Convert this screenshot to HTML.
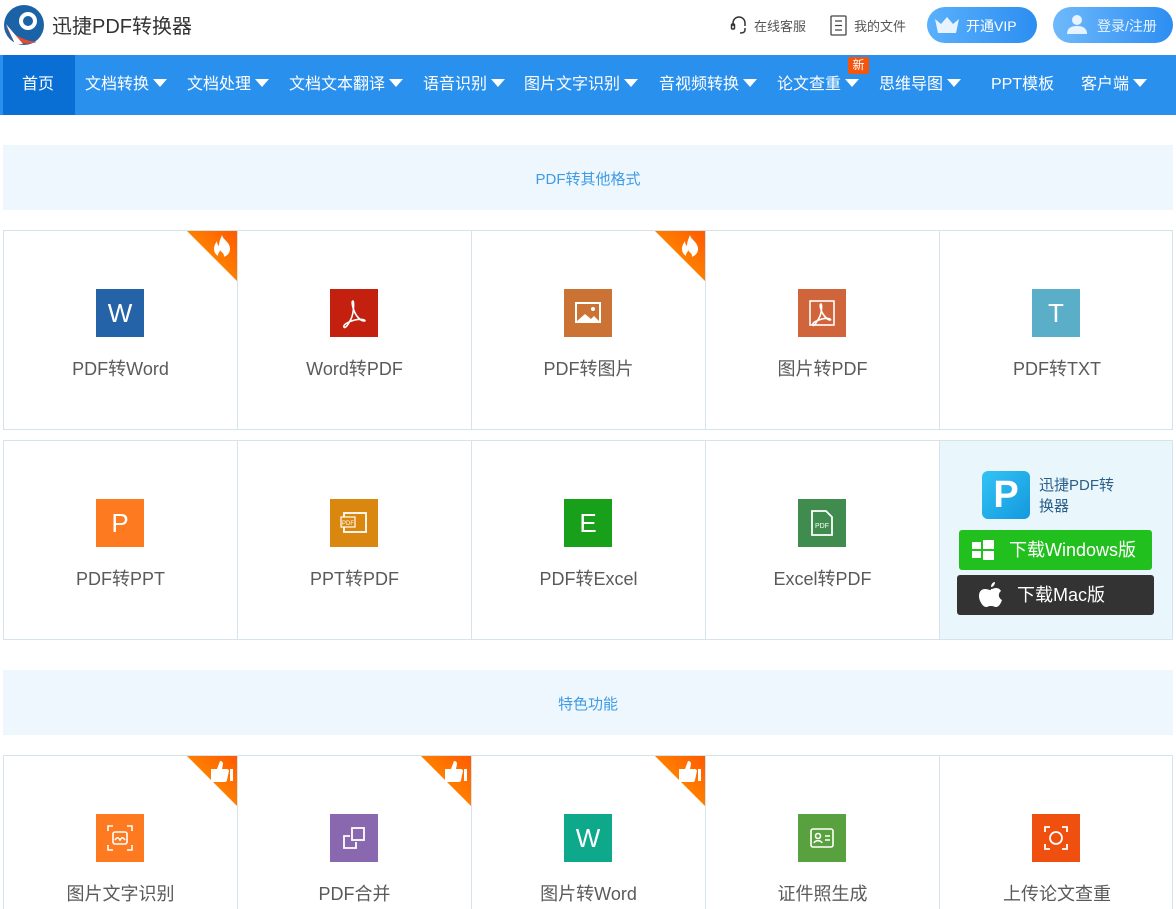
<!DOCTYPE html>
<html><head><meta charset="utf-8"><style>
*{margin:0;padding:0;box-sizing:border-box}
html,body{width:1176px;height:909px;overflow:hidden}
body{background:#fff;font-family:"Liberation Sans","Noto Sans CJK SC",sans-serif;position:relative}
.abs{position:absolute}
.nav{position:absolute;left:0;top:55px;width:1176px;height:60px;background:#2a90ee}
.nav span{position:absolute;top:0;line-height:60px;color:#fff;font-size:16px;white-space:nowrap}
.tri{display:inline-block;width:0;height:0;border-left:7px solid transparent;border-right:7px solid transparent;border-top:8px solid #fff;margin-left:4px;vertical-align:2px}
.sec{position:absolute;left:3px;width:1170px;height:65px;background:#eff7fe;color:#3e9be4;font-size:15px;text-align:center;line-height:69px}
.row{position:absolute;left:3px;width:1170px;height:200px;border:1px solid #d7e3ea;overflow:hidden}
.cell{position:absolute;top:0;height:100%;width:234px;border-right:1px solid #d7e3ea;overflow:hidden}
.ic{position:absolute;left:92px;top:58px;width:48px;height:48px;color:#fff;font-size:26px;text-align:center;line-height:48px}
.ic svg{position:absolute;left:0;top:0}
.lb{position:absolute;left:0;width:100%;top:124px;text-align:center;font-size:18px;color:#5a5a5a}
.badge{position:absolute;right:0;top:0;width:50px;height:50px;background:linear-gradient(225deg,#ff5a00,#ffa300);clip-path:polygon(0 0,100% 0,100% 100%)}
.bi{position:absolute;right:3px;top:3px}
</style></head><body>
<svg class="abs" style="left:3px;top:4px" width="42" height="42" viewBox="0 0 42 42"><circle cx="21" cy="21" r="20" fill="#1b63a6"/><circle cx="25" cy="17" r="9" fill="#fff"/><circle cx="25" cy="17" r="5" fill="#1b63a6"/><path d="M3 22 Q14 36 34 38 Q22 42 10 36Z" fill="#e94a2e"/><path d="M3 20 L20 40 L12 40Z" fill="#fff"/></svg>
<div class="abs" style="left:52px;top:10px;font-size:20px;color:#333">迅捷PDF转换器</div>
<svg class="abs" style="left:729px;top:15px" width="20" height="20" viewBox="0 0 20 20" fill="none" stroke="#333" stroke-width="1.5"><path d="M4 11V8a6 6 0 0112 0v3"/><rect x="2.5" y="9" width="3" height="5" rx="1"/><path d="M16 13v2c0 2-2 3-5 3"/></svg>
<div class="abs" style="left:754px;top:16px;font-size:13px;color:#555">在线客服</div>
<svg class="abs" style="left:830px;top:15px" width="18" height="21" viewBox="0 0 18 21" fill="none" stroke="#444" stroke-width="1.3"><rect x="1" y="1" width="15" height="19" rx="1"/><path d="M5 6h7M5 10.5h7M5 15h7"/></svg>
<div class="abs" style="left:854px;top:16px;font-size:13px;color:#555">我的文件</div>
<div class="abs" style="left:927px;top:7px;width:110px;height:36px;border-radius:18px;background:linear-gradient(90deg,#5ab0fb,#2c8ef2)"></div>
<svg class="abs" style="left:934px;top:16px" width="26" height="18" viewBox="0 0 26 18"><path d="M1 3l6 5 6-7 6 7 6-5-3 14H4z" fill="#e7f3ff"/></svg>
<div class="abs" style="left:966px;top:16px;font-size:14px;color:#fff">开通VIP</div>
<div class="abs" style="left:1053px;top:7px;width:120px;height:36px;border-radius:18px;background:linear-gradient(90deg,#6fb9fb,#2c8ef2)"></div>
<svg class="abs" style="left:1066px;top:13px" width="22" height="22" viewBox="0 0 22 22" fill="#e7f3ff"><circle cx="11" cy="7" r="5"/><path d="M1 21c0-6 4-8 10-8s10 2 10 8z"/></svg>
<div class="abs" style="left:1097px;top:16px;font-size:14px;color:#eaf4ff">登录/注册</div>
<div class="nav">
<div class="abs" style="left:3px;top:0;width:72px;height:60px;background:#0a6fd5"></div>
<span style="left:22px">首页</span>
<span style="left:85px">文档转换<i class="tri"></i></span>
<span style="left:187px">文档处理<i class="tri"></i></span>
<span style="left:289px">文档文本翻译<i class="tri"></i></span>
<span style="left:423px">语音识别<i class="tri"></i></span>
<span style="left:524px">图片文字识别<i class="tri"></i></span>
<span style="left:659px">音视频转换<i class="tri"></i></span>
<span style="left:777px">论文查重<i class="tri"></i></span>
<span style="left:879px">思维导图<i class="tri"></i></span>
<span style="left:991px">PPT模板</span>
<span style="left:1081px">客户端<i class="tri"></i></span>
<div class="abs" style="left:848px;top:2px;width:21px;height:17px;background:#f5560c;color:#fff;font-size:12px;line-height:17px;text-align:center;border-radius:2px">新</div>
</div>
<div class="sec" style="top:145px">PDF转其他格式</div>
<div class="row" style="top:230px">
<div class="cell" style="left:0"><div class="badge"></div><svg class="bi" width="24" height="26" viewBox="0 0 24 26" fill="#fff"><path d="M12 1c1 5 8 7 8 14a8 8 0 01-16 0c0-4 2-6 3-8 0 3 1 4 2 5 0-5 2-8 3-11z"/><path d="M12 25c-3 0-4-2-4-4 0-2 2-3 2-5 1 2 4 3 4 6 0 2-1 3-2 3z" fill="#ff7a00"/></svg><div class="ic" style="background:#2563a8">W</div><div class="lb">PDF转Word</div></div>
<div class="cell" style="left:234px"><div class="ic" style="background:#c4200f"><svg width="48" height="48" viewBox="0 0 48 48" fill="none" stroke="#fff" stroke-width="1.6"><path d="M23 12c-2 0 0 8 2 12s6 8 9 8-1-3-9-1-12 5-11 7 4-2 7-8 3-18 2-18z"/></svg></div><div class="lb">Word转PDF</div></div>
<div class="cell" style="left:468px"><div class="badge"></div><svg class="bi" width="24" height="26" viewBox="0 0 24 26" fill="#fff"><path d="M12 1c1 5 8 7 8 14a8 8 0 01-16 0c0-4 2-6 3-8 0 3 1 4 2 5 0-5 2-8 3-11z"/><path d="M12 25c-3 0-4-2-4-4 0-2 2-3 2-5 1 2 4 3 4 6 0 2-1 3-2 3z" fill="#ff7a00"/></svg><div class="ic" style="background:#cb7334"><svg width="48" height="48" viewBox="0 0 48 48"><rect x="12" y="14" width="24" height="19" fill="none" stroke="#fff" stroke-width="2"/><path d="M13 32l8-7 6 5 3-3 5 5z" fill="#fff"/><circle cx="29" cy="20" r="2" fill="#fff"/></svg></div><div class="lb">PDF转图片</div></div>
<div class="cell" style="left:702px"><div class="ic" style="background:#d0643a"><svg width="48" height="48" viewBox="0 0 48 48" fill="none" stroke="#fff" stroke-width="1.6"><rect x="12" y="12" width="24" height="24"/><path d="M23 15c-2 0 0 7 2 10s5 6 7 6-1-3-8-1-10 4-9 6 3-2 6-7 3-14 2-14z"/></svg></div><div class="lb">图片转PDF</div></div>
<div class="cell" style="left:936px;border-right:none"><div class="ic" style="background:#5aaec8">T</div><div class="lb">PDF转TXT</div></div>
</div>
<div class="row" style="top:440px">
<div class="cell" style="left:0"><div class="ic" style="background:#fd7a20">P</div><div class="lb">PDF转PPT</div></div>
<div class="cell" style="left:234px"><div class="ic" style="background:#d9870e"><svg width="48" height="48" viewBox="0 0 48 48"><rect x="14" y="14" width="22" height="19" fill="none" stroke="#fff" stroke-width="1.8"/><rect x="11" y="18" width="14" height="10" fill="#d9870e" stroke="#fff" stroke-width="1.2"/><text x="18" y="26" font-size="6" fill="#fff" text-anchor="middle" font-family="Liberation Sans">PDF</text></svg></div><div class="lb">PPT转PDF</div></div>
<div class="cell" style="left:468px"><div class="ic" style="background:#18a01b">E</div><div class="lb">PDF转Excel</div></div>
<div class="cell" style="left:702px"><div class="ic" style="background:#3f8c4e"><svg width="48" height="48" viewBox="0 0 48 48"><path d="M14 12h14l6 6v18H14z" fill="none" stroke="#fff" stroke-width="1.8"/><text x="24" y="29" font-size="7" fill="#fff" text-anchor="middle" font-family="Liberation Sans">PDF</text></svg></div><div class="lb">Excel转PDF</div></div>
<div class="cell" style="left:936px;width:232px;border-right:none;background:#e9f7fc">
<div class="abs" style="left:42px;top:30px;width:48px;height:48px;border-radius:6px;background:linear-gradient(135deg,#33c3f5,#1498de);color:#fff;font-size:38px;font-weight:bold;text-align:center;line-height:48px">P</div>
<div class="abs" style="left:99px;top:34px;font-size:15px;color:#2a5f8a;line-height:21px">迅捷PDF转<br>换器</div>
<div class="abs" style="left:19px;top:89px;width:193px;height:40px;border-radius:3px;background:#22c01e;color:#fff;font-size:18px;line-height:40px;padding-left:50px">下载Windows版</div>
<svg class="abs" style="left:32px;top:98px" width="22" height="22" viewBox="0 0 22 22" fill="#fff"><rect x="0" y="3" width="9" height="7"/><rect x="11" y="1" width="11" height="9"/><rect x="0" y="12" width="9" height="7"/><rect x="11" y="12" width="11" height="9"/></svg>
<div class="abs" style="left:17px;top:134px;width:197px;height:40px;border-radius:3px;background:#333;color:#fff;font-size:18px;line-height:40px;padding-left:60px">下载Mac版</div>
<svg class="abs" style="left:38px;top:140px" width="26" height="28" viewBox="0 0 26 28" fill="#fff"><path d="M17 1c0 3-2 5-4 5 0-3 2-5 4-5z"/><path d="M13 8c2 0 3-1 5-1s4 1 5 3c-3 2-3 7 1 9-1 3-3 7-6 7-2 0-2-1-5-1s-3 1-5 1c-3 0-7-6-7-11 0-5 3-7 6-7 2 0 4 1 6 1z"/></svg>
</div>
</div>
<div class="sec" style="top:670px">特色功能</div>
<div class="row" style="top:755px;height:160px">
<div class="cell" style="left:0"><div class="badge"></div><svg class="bi" width="26" height="24" viewBox="0 0 26 24" fill="#fff"><path d="M3 10h6l3-8c2 0 3 1 3 3l-1 5h5c1 0 2 1 2 2l-2 9c0 1-1 2-2 2H3z"/><rect x="22" y="10" width="3" height="12"/></svg><div class="ic" style="background:#fd7a20"><svg width="48" height="48" viewBox="0 0 48 48" fill="none" stroke="#fff" stroke-width="1.6"><path d="M12 17v-5h5M31 12h5v5M36 31v5h-5M17 36h-5v-5"/><rect x="17" y="18" width="14" height="12" rx="2"/><path d="M19 26c2-3 3-3 5 0 2-3 3-3 5 0"/></svg></div><div class="lb">图片文字识别</div></div>
<div class="cell" style="left:234px"><div class="badge"></div><svg class="bi" width="26" height="24" viewBox="0 0 26 24" fill="#fff"><path d="M3 10h6l3-8c2 0 3 1 3 3l-1 5h5c1 0 2 1 2 2l-2 9c0 1-1 2-2 2H3z"/><rect x="22" y="10" width="3" height="12"/></svg><div class="ic" style="background:#8a68b0"><svg width="48" height="48" viewBox="0 0 48 48" fill="none" stroke="#fff" stroke-width="1.8"><rect x="22" y="14" width="12" height="12"/><path d="M20 22h-6v12h12v-6"/></svg></div><div class="lb">PDF合并</div></div>
<div class="cell" style="left:468px"><div class="badge"></div><svg class="bi" width="26" height="24" viewBox="0 0 26 24" fill="#fff"><path d="M3 10h6l3-8c2 0 3 1 3 3l-1 5h5c1 0 2 1 2 2l-2 9c0 1-1 2-2 2H3z"/><rect x="22" y="10" width="3" height="12"/></svg><div class="ic" style="background:#0ea98b">W</div><div class="lb">图片转Word</div></div>
<div class="cell" style="left:702px"><div class="ic" style="background:#59a13e"><svg width="48" height="48" viewBox="0 0 48 48" fill="none" stroke="#fff" stroke-width="1.6"><rect x="13" y="15" width="22" height="18" rx="2"/><circle cx="20" cy="22" r="2.5"/><path d="M16 29c1-3 7-3 8 0M27 22h5M27 26h5"/></svg></div><div class="lb">证件照生成</div></div>
<div class="cell" style="left:936px;border-right:none"><div class="ic" style="background:#f0500f"><svg width="48" height="48" viewBox="0 0 48 48" fill="none" stroke="#fff" stroke-width="1.8"><path d="M13 18v-5h5M30 13h5v5M35 30v5h-5M18 35h-5v-5"/><circle cx="24" cy="24" r="6"/></svg></div><div class="lb">上传论文查重</div></div>
</div>
</body></html>
